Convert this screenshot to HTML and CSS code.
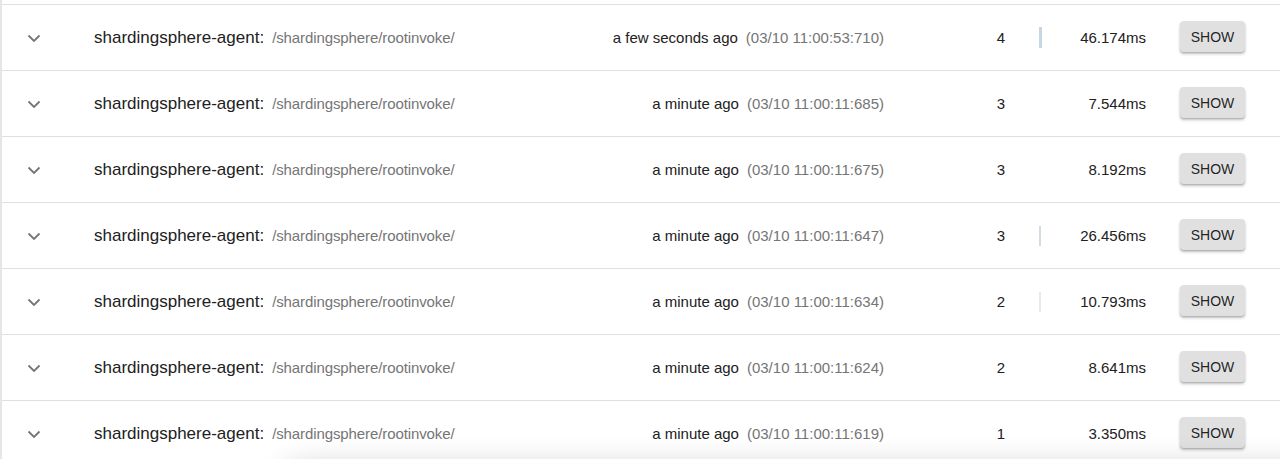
FILE: index.html
```html
<!DOCTYPE html>
<html>
<head>
<meta charset="utf-8">
<link rel="stylesheet" href="styles.css">
</head>
<body>
<div class="list">
  <div class="row">
    <div class="chev"><svg width="14" height="9" viewBox="0 0 14 9"><path d="M1.5 1.5 L7 7 L12.5 1.5" fill="none" stroke="#757575" stroke-width="1.8"/></svg></div>
    <div class="main"><span class="title">shardingsphere-agent:</span><span class="path">/shardingsphere/rootinvoke/</span></div>
    <div class="time"><span class="ago">a few seconds ago</span><span class="date">(03/10 11:00:53:710)</span></div>
    <div class="count">4</div>
    <div class="barcell"><span class="bar b1"></span></div>
    <div class="dur">46.174ms</div>
    <div class="actions"><button class="show">SHOW</button></div>
  </div>
  <div class="row">
    <div class="chev"><svg width="14" height="9" viewBox="0 0 14 9"><path d="M1.5 1.5 L7 7 L12.5 1.5" fill="none" stroke="#757575" stroke-width="1.8"/></svg></div>
    <div class="main"><span class="title">shardingsphere-agent:</span><span class="path">/shardingsphere/rootinvoke/</span></div>
    <div class="time"><span class="ago">a minute ago</span><span class="date">(03/10 11:00:11:685)</span></div>
    <div class="count">3</div>
    <div class="barcell"></div>
    <div class="dur">7.544ms</div>
    <div class="actions"><button class="show">SHOW</button></div>
  </div>
  <div class="row">
    <div class="chev"><svg width="14" height="9" viewBox="0 0 14 9"><path d="M1.5 1.5 L7 7 L12.5 1.5" fill="none" stroke="#757575" stroke-width="1.8"/></svg></div>
    <div class="main"><span class="title">shardingsphere-agent:</span><span class="path">/shardingsphere/rootinvoke/</span></div>
    <div class="time"><span class="ago">a minute ago</span><span class="date">(03/10 11:00:11:675)</span></div>
    <div class="count">3</div>
    <div class="barcell"></div>
    <div class="dur">8.192ms</div>
    <div class="actions"><button class="show">SHOW</button></div>
  </div>
  <div class="row">
    <div class="chev"><svg width="14" height="9" viewBox="0 0 14 9"><path d="M1.5 1.5 L7 7 L12.5 1.5" fill="none" stroke="#757575" stroke-width="1.8"/></svg></div>
    <div class="main"><span class="title">shardingsphere-agent:</span><span class="path">/shardingsphere/rootinvoke/</span></div>
    <div class="time"><span class="ago">a minute ago</span><span class="date">(03/10 11:00:11:647)</span></div>
    <div class="count">3</div>
    <div class="barcell"><span class="bar b2"></span></div>
    <div class="dur">26.456ms</div>
    <div class="actions"><button class="show">SHOW</button></div>
  </div>
  <div class="row">
    <div class="chev"><svg width="14" height="9" viewBox="0 0 14 9"><path d="M1.5 1.5 L7 7 L12.5 1.5" fill="none" stroke="#757575" stroke-width="1.8"/></svg></div>
    <div class="main"><span class="title">shardingsphere-agent:</span><span class="path">/shardingsphere/rootinvoke/</span></div>
    <div class="time"><span class="ago">a minute ago</span><span class="date">(03/10 11:00:11:634)</span></div>
    <div class="count">2</div>
    <div class="barcell"><span class="bar b3"></span></div>
    <div class="dur">10.793ms</div>
    <div class="actions"><button class="show">SHOW</button></div>
  </div>
  <div class="row">
    <div class="chev"><svg width="14" height="9" viewBox="0 0 14 9"><path d="M1.5 1.5 L7 7 L12.5 1.5" fill="none" stroke="#757575" stroke-width="1.8"/></svg></div>
    <div class="main"><span class="title">shardingsphere-agent:</span><span class="path">/shardingsphere/rootinvoke/</span></div>
    <div class="time"><span class="ago">a minute ago</span><span class="date">(03/10 11:00:11:624)</span></div>
    <div class="count">2</div>
    <div class="barcell"></div>
    <div class="dur">8.641ms</div>
    <div class="actions"><button class="show">SHOW</button></div>
  </div>
  <div class="row">
    <div class="chev"><svg width="14" height="9" viewBox="0 0 14 9"><path d="M1.5 1.5 L7 7 L12.5 1.5" fill="none" stroke="#757575" stroke-width="1.8"/></svg></div>
    <div class="main"><span class="title">shardingsphere-agent:</span><span class="path">/shardingsphere/rootinvoke/</span></div>
    <div class="time"><span class="ago">a minute ago</span><span class="date">(03/10 11:00:11:619)</span></div>
    <div class="count">1</div>
    <div class="barcell"></div>
    <div class="dur">3.350ms</div>
    <div class="actions"><button class="show">SHOW</button></div>
  </div>
</div>
<div class="floating-shadow"></div>
</body>
</html>
```
FILE: styles.css
```css
html, body {
  margin: 0;
  padding: 0;
  background: #fff;
  overflow: hidden;
}
body {
  font-family: "Liberation Sans", Arial, Helvetica, sans-serif;
  color: #212121;
}
.list {
  padding-top: 4px;
  border-left: 2px solid #e6e6e6;
}
.row {
  display: flex;
  align-items: center;
  height: 65px;
  border-top: 1px solid #e0e0e0;
}
.chev {
  width: 92px;
  padding-left: 25px;
  box-sizing: border-box;
  display: flex;
  align-items: center;
  padding-top: 1px;
}
.main {
  flex: 1;
  white-space: nowrap;
}
.title {
  font-size: 17px;
  color: #212121;
}
.path {
  font-size: 15px;
  color: #757575;
  margin-left: 8px;
  letter-spacing: -0.1px;
}
.time {
  text-align: right;
  margin-right: 96px;
  white-space: nowrap;
  font-size: 15px;
}
.ago {
  color: #212121;
}
.date {
  color: #757575;
  margin-left: 8px;
}
.count {
  width: 42px;
  text-align: center;
  font-size: 15px;
}
.barcell {
  width: 38px;
  padding-left: 17px;
  box-sizing: border-box;
  display: flex;
  align-items: center;
  height: 24px;
}
.bar {
  display: block;
  width: 3px;
  height: 21px;
  background: #c8d6e3;
}
.bar.b2 {
  width: 2px;
  height: 20px;
  background: #d3dbe2;
}
.bar.b3 {
  width: 2px;
  height: 20px;
  background: #e6eaee;
}
.dur {
  width: 86px;
  text-align: right;
  font-size: 15px;
}
.actions {
  width: 134px;
  padding-left: 34px;
  box-sizing: border-box;
}
.show {
  font-family: "Liberation Sans", Arial, sans-serif;
  font-size: 14px;
  color: rgba(0, 0, 0, 0.87);
  background: #e0e0e0;
  border: none;
  border-radius: 4px;
  height: 31px;
  width: 65px;
  padding: 0;
  margin-top: -2px;
  box-shadow: 0 2px 3px rgba(0, 0, 0, 0.25), 0 1px 1px rgba(0, 0, 0, 0.1);
}
.floating-shadow {
  position: fixed;
  left: 270px;
  right: -40px;
  bottom: -44px;
  height: 40px;
  border-radius: 40px 0 0 0;
  background: #fff;
  box-shadow: 0 0 28px rgba(0, 0, 0, 0.16);
}
```
